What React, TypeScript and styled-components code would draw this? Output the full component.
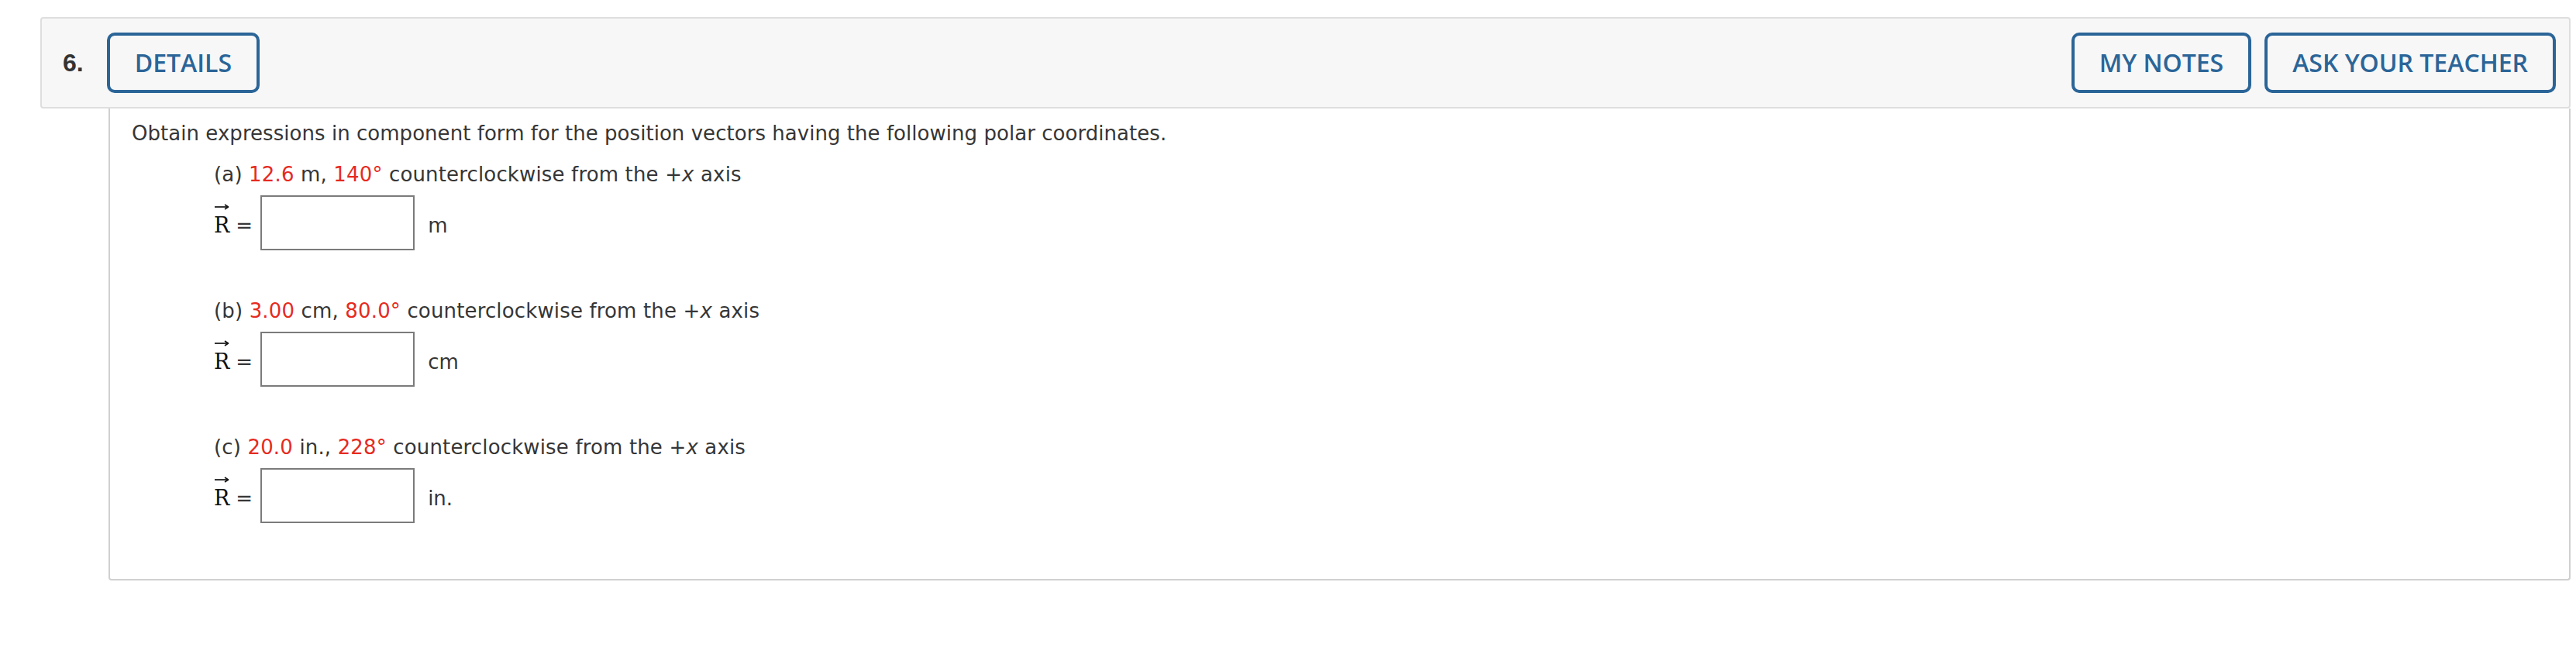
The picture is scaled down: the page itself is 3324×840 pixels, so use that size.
import styled, { createGlobalStyle } from 'styled-components';

const GlobalStyle = createGlobalStyle`
  html, body {
    margin: 0;
    padding: 0;
    background: #fff;
  }
  body {
    font-family: 'DejaVu Sans', Verdana, sans-serif;
    color: #363636;
  }
`;

interface Part {
    letter: string;
    magnitude: string;
    unitText: string;
    angle: string;
    unit: string;
}

const parts: Part[] = [
    { letter: 'a', magnitude: '12.6', unitText: ' m, ', angle: '140°', unit: 'm' },
    { letter: 'b', magnitude: '3.00', unitText: ' cm, ', angle: '80.0°', unit: 'cm' },
    { letter: 'c', magnitude: '20.0', unitText: ' in., ', angle: '228°', unit: 'in.' },
];

function VectorR() {
    return (
        <VecWrap>
            <svg width="20" height="8" viewBox="0 0 20 8">
                <path d="M1 4 H18" stroke="#111" strokeWidth="1.7" fill="none" />
                <path d="M14 1 L18.6 4 L14 7" stroke="#111" strokeWidth="1.5" fill="none" strokeLinejoin="round" />
            </svg>
            <VecLetter>R</VecLetter>
        </VecWrap>
    );
}

function App() {
    return (
        <>
            <GlobalStyle />
            <Page>
                <Header>
                    <QuestionNumber>6.</QuestionNumber>
                    <OutlineButton>DETAILS</OutlineButton>
                    <Spacer />
                    <ButtonGroup>
                        <OutlineButton>MY NOTES</OutlineButton>
                        <OutlineButton>ASK YOUR TEACHER</OutlineButton>
                    </ButtonGroup>
                </Header>
                <Body>
                    <Prompt>
                        Obtain expressions in component form for the position vectors having the following polar coordinates.
                    </Prompt>
                    {parts.map((part) => (
                        <PartBlock key={part.letter}>
                            <PartLabel>
                                ({part.letter}) <Given>{part.magnitude}</Given>{part.unitText}
                                <Given>{part.angle}</Given> counterclockwise from the +<i>x</i> axis
                            </PartLabel>
                            <AnswerRow>
                                <VectorR />
                                <Equals>=</Equals>
                                <AnswerInput type="text" aria-label={`part ${part.letter}`} />
                                <Unit>{part.unit}</Unit>
                            </AnswerRow>
                        </PartBlock>
                    ))}
                </Body>
            </Page>
        </>
    );
}

const Page = styled.div`
    padding: 22px 7px 0 52px;
`;

const Header = styled.div`
    display: flex;
    align-items: center;
    height: 114px;
    padding: 0 17px 0 27px;
    background: #f7f7f7;
    border: 2px solid #dedede;
    border-radius: 4px;
`;

const QuestionNumber = styled.span`
    font-family: 'Liberation Sans', Arial, sans-serif;
    font-weight: 700;
    font-size: 32px;
    color: #333;
    margin-right: 30px;
`;

const Spacer = styled.div`
    flex: 1;
`;

const ButtonGroup = styled.div`
    display: flex;
    gap: 17px;
`;

const OutlineButton = styled.button`
    box-sizing: border-box;
    height: 78px;
    padding: 0 32px;
    border: 4px solid #2b6598;
    border-radius: 10px;
    background: transparent;
    color: #2b6598;
    font-family: 'Open Sans', sans-serif;
    font-weight: 600;
    font-size: 32px;
    line-height: 70px;
    cursor: pointer;
`;

const Body = styled.div`
    margin-left: 88px;
    border: 2px solid #d0d0d0;
    border-top: none;
    border-radius: 0 0 4px 4px;
    padding: 13px 28px 72px;
    font-size: 26px;
    line-height: 39px;
`;

const Prompt = styled.div`
    margin-bottom: 14px;
    letter-spacing: 0.04px;
`;

const PartBlock = styled.div`
    margin-left: 106px;

    & + & {
        margin-top: 59px;
    }
`;

const PartLabel = styled.div`
    letter-spacing: 0.15px;

    i {
        font-style: italic;
    }
`;

const Given = styled.span`
    color: #e62b1f;
`;

const AnswerRow = styled.div`
    display: flex;
    align-items: flex-start;
    margin-top: 7px;
`;

const VecWrap = styled.span`
    display: inline-flex;
    flex-direction: column;
    align-items: flex-start;
    margin-top: 11px;

    svg {
        display: block;
        margin-bottom: 6px;
    }
`;

const VecLetter = styled.span`
    font-family: 'DejaVu Serif', 'Liberation Serif', serif;
    font-size: 27px;
    line-height: 27px;
    color: #111;
`;

const Equals = styled.span`
    margin: 20px 10px 0 8px;
`;

const AnswerInput = styled.input`
    box-sizing: border-box;
    width: 199px;
    height: 71px;
    margin: 0;
    border: 2px solid #7b7b7b;
    border-radius: 0;
    background: #fff;
    font-family: 'DejaVu Sans', Verdana, sans-serif;
    font-size: 26px;
    padding: 0 8px;
    outline: none;
`;

const Unit = styled.span`
    margin: 20px 0 0 17px;
`;

export default App;
